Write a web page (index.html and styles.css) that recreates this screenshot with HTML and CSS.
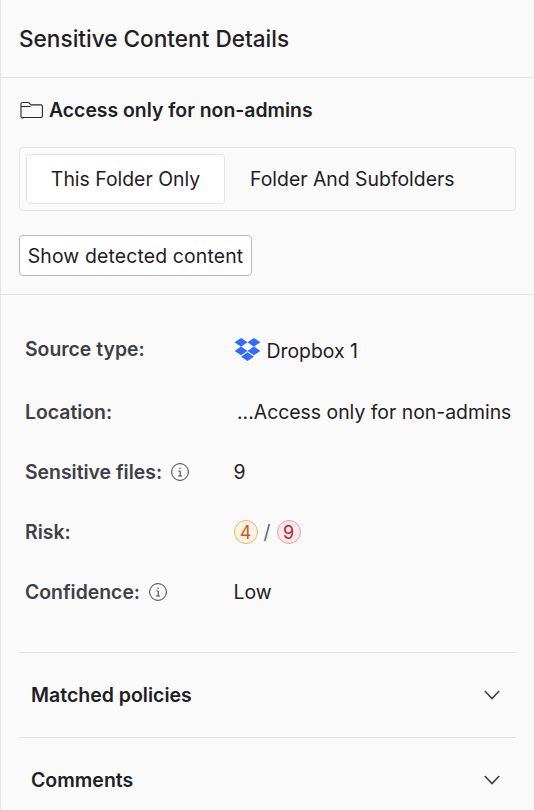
FILE: index.html
```html
<!DOCTYPE html>
<html lang="en">
<head>
<meta charset="utf-8">
<title>Sensitive Content Details</title>
<link rel="stylesheet" href="styles.css">
</head>
<body>
<main class="panel">
  <header class="header"><h1 class="title">Sensitive Content Details</h1></header>
  <section class="top">
    <div class="folder-line">
      <svg class="folder-icon" viewBox="0 0 23 18" fill="none" stroke="#26272b" stroke-width="1.100"><path d="M1 15V3a1.5 1.5 0 0 1 1.5-1.5h5.6c.5 0 .9.2 1.2.6l1.1 1.3c.3.3.6.5 1.1.5h9.400a1.500 1.500 0 0 1 1.500 1.500v9.600a1.500 1.500 0 0 1-1.500 1.500h-17.400A1.500 1.500 0 0 1 1 15z"/><path d="M1 5.500h9.500"/></svg>
      <h2 class="folder-name">Access only for non-admins</h2>
    </div>
    <div class="tabs">
      <div class="tab tab-active">This Folder Only</div>
      <div class="tab">Folder And Subfolders</div>
    </div>
    <button class="show-btn">Show detected content</button>
  </section>
  <section class="details">
    <div class="row row-first">
      <div class="label">Source type:</div>
      <div class="value">
        <svg class="dropbox" viewBox="0 0 28 25" fill="#2f6bff"><path d="M7 0 0 4.700l7 4.700 7-4.700zM21 0l-7 4.700 7 4.700 7-4.700zM0 14l7 4.700 7-4.700-7-4.700zM21 9.300 14 14l7 4.700 7-4.700zM7 20.300l7 4.700 7-4.700-7-4.700z"/></svg>
        <span class="source-name">Dropbox 1</span>
      </div>
    </div>
    <div class="row">
      <div class="label">Location:</div>
      <div class="value value-loc">...Access only for non-admins</div>
    </div>
    <div class="row">
      <div class="label">Sensitive files:
        <svg class="info" viewBox="0 0 18 18" fill="none" stroke="#3f3f46"><circle cx="9" cy="9" r="8.400"/><path d="M7.500 8h1.700v5M7.200 13h3.800"/><circle cx="9" cy="5.200" r=".7" fill="#3f3f46" stroke="none"/></svg>
      </div>
      <div class="value">9</div>
    </div>
    <div class="row">
      <div class="label">Risk:</div>
      <div class="value">
        <span class="badge badge-orange">4</span>
        <span class="slash">/</span>
        <span class="badge badge-red">9</span>
      </div>
    </div>
    <div class="row">
      <div class="label">Confidence:
        <svg class="info" viewBox="0 0 18 18" fill="none" stroke="#3f3f46"><circle cx="9" cy="9" r="8.400"/><path d="M7.500 8h1.700v5M7.200 13h3.800"/><circle cx="9" cy="5.200" r=".7" fill="#3f3f46" stroke="none"/></svg>
      </div>
      <div class="value">Low</div>
    </div>
  </section>
  <section class="accordion">
    <div class="acc-item">
      <span>Matched policies</span>
      <svg class="chevron" viewBox="0 0 16 10" fill="none" stroke="#3f3f46" stroke-width="1.600"><path d="M.8 1 8 8.500 15.200 1"/></svg>
    </div>
    <div class="acc-item">
      <span>Comments</span>
      <svg class="chevron" viewBox="0 0 16 10" fill="none" stroke="#3f3f46" stroke-width="1.600"><path d="M.8 1 8 8.500 15.200 1"/></svg>
    </div>
  </section>
</main>
</body>
</html>
```
FILE: styles.css
```css
* { box-sizing: border-box; }
html, body { margin: 0; height: 100%; }
body { overflow: hidden; background: #fafafa; font-family: Inter, "Liberation Sans", sans-serif; color: #1f2024; }
.panel { height: 810px; border-left: 1px solid #e4e4ea; background: #fafafa; overflow: hidden; }
.header { height: 78px; padding: 0 18px 1px; display: flex; align-items: center; border-bottom: 1px solid #e4e4e7; }
.title { margin: 0; font-size: 22.6px; font-weight: 500; }
.top { height: 217px; padding: 0 18px; border-bottom: 1px solid #e4e4e7; }
.folder-line { display: flex; align-items: center; gap: 6px; height: 69px; padding-bottom: 6px; padding-left: 1px; }
.folder-icon { width: 23px; height: 18px; flex: none; margin-top: 1px; }
.folder-name { margin: 0; font-size: 19.4px; font-weight: 600; }
.tabs { display: flex; height: 64px; padding: 6px; border: 1px solid #e4e4e7; border-radius: 4px; }
.tab { height: 50px; display: flex; align-items: center; justify-content: center; font-size: 19.4px; padding: 0 25px; }
.tab-active { width: 199px; padding: 0; background: #fff; border: 1px solid #e4e4e7; border-radius: 4px; }
.show-btn { display: block; margin-top: 24px; height: 41px; width: 233px; padding: 0; background: #fff; border: 1px solid #b9b9be; border-radius: 4px; font: 400 19.4px Inter, "Liberation Sans", sans-serif; letter-spacing: .15px; color: #1f2024; }
.details { height: 357px; padding: 21px 0 0 24px; }
.row { display: flex; align-items: center; height: 60px; }
.row-first { height: 66px; }
.label { width: 208.500px; display: flex; align-items: center; gap: 8px; font-size: 19.4px; font-weight: 600; color: #3f3f46; flex: none; }
.value { display: flex; align-items: center; font-size: 19.4px; }
.source-name { padding-top: 4px; }
.value-loc { padding-left: 3.500px; }
.dropbox { width: 27px; height: 23px; margin-right: 6px; }
.info { width: 18px; height: 18px; flex: none; margin-left: 1px; }
.badge { width: 24px; height: 24px; border-radius: 50%; display: flex; align-items: center; justify-content: center; font-size: 18px; }
.badge-orange { background: #fff3e3; border: 1px solid #f6b05c; color: #cc5a1e; }
.badge-red { background: #fde8ea; border: 1px solid #ee9aa2; color: #b81f2a; }
.slash { width: 19px; text-align: center; color: #66666e; }
.accordion { padding: 0 18px; }
.acc-item { height: 85px; border-top: 1px solid #e4e4e7; display: flex; align-items: center; justify-content: space-between; padding: 0 16px 0 12px; font-size: 19.5px; font-weight: 600; }
.chevron { width: 16px; height: 10px; }
```
